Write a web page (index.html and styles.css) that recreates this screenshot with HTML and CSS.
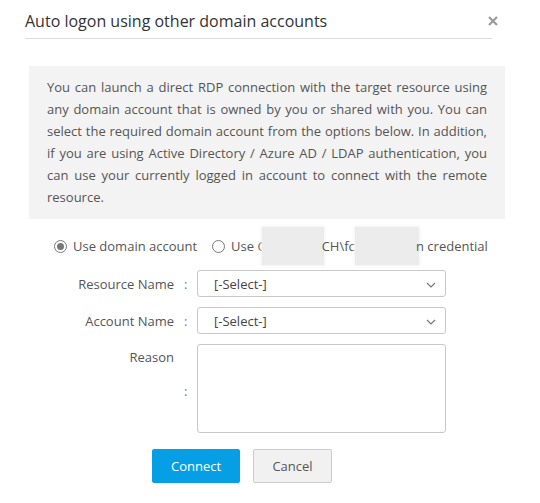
FILE: index.html
```html
<!DOCTYPE html>
<html>
<head>
<meta charset="utf-8">
<link rel="stylesheet" href="styles.css">
</head>
<body>
<div class="dialog">
  <div class="header">
    <div class="title">Auto logon using other domain accounts</div>
    <svg class="close" width="10" height="10" viewBox="0 0 10 10"><path d="M1 1L9 9M9 1L1 9" stroke="#9a9a9a" stroke-width="2.2"/></svg>
  </div>
  <div class="info">You can launch a direct RDP connection with the target resource using any domain account that is owned by you or shared with you. You can select the required domain account from the options below. In addition, if you are using Active Directory / Azure AD / LDAP authentication, you can use your currently logged in account to connect with the remote resource.</div>
  <div class="radios">
    <label class="radio"><span class="dot checked"></span>Use domain account</label>
    <label class="radio second"><span class="dot"></span>Use C<span class="redact r1"></span>CH\fca<span class="redact r2"></span>n credential</label>
  </div>
  <div class="form">
    <div class="row">
      <div class="lbl">Resource Name</div>
      <div class="colon">:</div>
      <div class="select"><span>[-Select-]</span><svg class="chev" width="10" height="6" viewBox="0 0 10 6"><path d="M1 1l4 4 4-4" fill="none" stroke="#777" stroke-width="1.2"/></svg></div>
    </div>
    <div class="row">
      <div class="lbl">Account Name</div>
      <div class="colon">:</div>
      <div class="select"><span>[-Select-]</span><svg class="chev" width="10" height="6" viewBox="0 0 10 6"><path d="M1 1l4 4 4-4" fill="none" stroke="#777" stroke-width="1.2"/></svg></div>
    </div>
    <div class="row reason">
      <div class="lbl top">Reason</div>
      <div class="colon mid">:</div>
      <div class="textarea"></div>
    </div>
    <div class="buttons">
      <button class="btn primary">Connect</button>
      <button class="btn">Cancel</button>
    </div>
  </div>
</div>
</body>
</html>
```
FILE: styles.css
```css
html, body {
  margin: 0;
  padding: 0;
  background: #fff;
}
body {
  font-family: "Open Sans", "DejaVu Sans", sans-serif;
  color: #555;
  width: 540px;
  height: 503px;
  overflow: hidden;
}
.header {
  margin: 0 48px 0 25px;
  height: 39px;
  border-bottom: 1px solid #dcdcdc;
  display: flex;
  align-items: center;
  justify-content: space-between;
  box-sizing: border-box;
}
.title {
  font-size: 16px;
  color: #333;
  padding-top: 3px;
}
.close {
  margin-right: -6px;
  margin-top: 4px;
}
.info {
  margin: 27px 35px 0 29px;
  background: #f3f3f3;
  padding: 10px 18px 11px 18px;
  font-size: 13px;
  line-height: 22px;
  text-align: justify;
  color: #555;
}
.radios {
  display: flex;
  align-items: center;
  margin: 17px 0 0 54px;
  height: 20px;
  font-size: 13px;
  color: #555;
}
.radio {
  display: flex;
  align-items: center;
  white-space: nowrap;
}
.radio.second {
  margin-left: 15px;
}
.dot {
  width: 11px;
  height: 11px;
  border: 1px solid #777;
  border-radius: 50%;
  margin-right: 6px;
  box-sizing: content-box;
  position: relative;
}
.dot.checked::after {
  content: "";
  position: absolute;
  left: 2px;
  top: 2px;
  width: 7px;
  height: 7px;
  border-radius: 50%;
  background: #777;
}
.redact {
  display: inline-block;
  height: 38px;
  background: #ececec;
  box-shadow: 0 0 3px 1px #f3f3f3;
  margin-top: -9px;
  margin-bottom: -9px;
}
.r1 { width: 62px; margin-left: -4px; margin-right: -2px; }
.r2 { width: 64px; margin-left: -7px; margin-right: -3px; }
.form {
  margin-top: 14px;
}
.row {
  display: grid;
  grid-template-columns: 174px 23px 249px;
  align-items: center;
  margin-bottom: 10px;
  font-size: 13px;
}
.lbl {
  text-align: right;
  color: #555;
}
.colon {
  padding-left: 10px;
  color: #777;
}
.select {
  height: 27px;
  border: 1px solid #c8c8c8;
  border-radius: 3px;
  box-sizing: border-box;
  display: flex;
  align-items: center;
  justify-content: space-between;
  padding: 0 9px 0 16px;
  color: #444;
}
.chev {
  margin-top: 3px;
}
.reason {
  align-items: stretch;
}
.reason .lbl.top {
  align-self: start;
  padding-top: 4px;
}
.reason .colon.mid {
  align-self: center;
  padding-top: 4px;
}
.textarea {
  height: 89px;
  border: 1px solid #c8c8c8;
  border-radius: 3px;
  box-sizing: border-box;
}
.buttons {
  display: flex;
  gap: 13px;
  margin: 16px 0 0 152px;
}
.btn {
  font-family: "Open Sans", "DejaVu Sans", sans-serif;
  font-size: 13px;
  height: 34px;
  border-radius: 2px;
  border: 1px solid #ccc;
  background: #f1f1f1;
  color: #555;
  padding: 0;
  width: 79px;
}
.btn.primary {
  background: #069fe6;
  border-color: #069fe6;
  color: #fff;
  width: 88px;
}
```
